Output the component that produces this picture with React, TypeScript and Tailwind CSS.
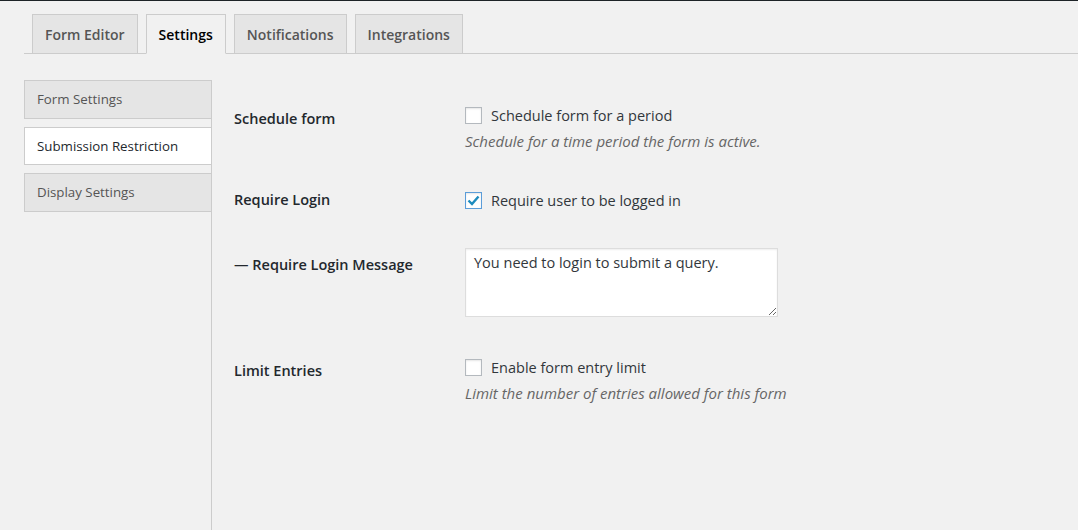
import React from 'react';

const tabs = ['Form Editor', 'Settings', 'Notifications', 'Integrations'];
const sideItems = ['Form Settings', 'Submission Restriction', 'Display Settings'];

function Checkbox({ checked = false }: { checked?: boolean }) {
  return (
    <span
      className={`flex h-[17px] w-[17px] shrink-0 items-center justify-center border bg-white shadow-[inset_0_1px_2px_rgba(0,0,0,0.1)] ${
        checked ? 'border-[#5b9dd9]' : 'border-[#b4b9be]'
      }`}
    >
      {checked && (
        <svg width="13" height="11" viewBox="0 0 13 11">
          <path d="M1.5 5.5 L5 9 L11.5 1.5" fill="none" stroke="#1e8cbe" strokeWidth="2.4" />
        </svg>
      )}
    </span>
  );
}

export default function App() {
  return (
    <div
      className="flex h-[530px] w-[1078px] flex-col overflow-hidden bg-[#f1f1f1] text-[#23282d]"
      style={{ fontFamily: '"Open Sans", "Noto Sans", sans-serif' }}
    >
      <div className="h-px bg-[#1d2327]" />

      <div className="ml-6 flex gap-2 border-b border-[#ccc] pl-2 pt-[13px]">
        {tabs.map((t) => {
          const active = t === 'Settings';
          return (
            <div
              key={t}
              className={`-mb-px flex h-[40px] items-center border px-3 text-[14px] font-semibold ${
                active
                  ? 'border-[#ccc] border-b-[#f1f1f1] bg-[#f1f1f1] text-black'
                  : 'border-[#ccc] bg-[#e5e5e5] text-[#555]'
              }`}
            >
              {t}
            </div>
          );
        })}
      </div>

      <div className="flex flex-1">
        <div className="ml-6 mt-[26px] flex w-[188px] flex-col gap-2 border-r border-[#ccc]">
          {sideItems.map((s) => {
            const active = s === 'Submission Restriction';
            return (
              <div
                key={s}
                className={`flex h-[38.5px] items-center border-y border-l border-[#ccc] pl-3 pt-[2px] text-[13.3px] ${
                  active ? 'bg-white text-[#23282d]' : 'bg-[#e5e5e5] text-[#555]'
                }`}
              >
                {s}
              </div>
            );
          })}
        </div>

        <div className="flex flex-col pl-[22px] pt-[52px] leading-[18px]">
          <div className="flex items-start">
            <div className="w-[231px] pt-1 text-[14.5px] font-semibold">Schedule form</div>
            <div className="flex flex-col">
              <label className="flex h-[18px] items-center gap-[9px] text-[14.5px] text-[#32373c]">
                <Checkbox />
                <span className="pt-[2px]">Schedule form for a period</span>
              </label>
              <p className="mt-2 text-[15px] italic text-[#666]">Schedule for a time period the form is active.</p>
            </div>
          </div>

          <div className="mt-[41px] flex items-start">
            <div className="w-[231px] text-[14.5px] font-semibold">Require Login</div>
            <label className="flex h-[18px] items-center gap-[9px] text-[14.5px] text-[#32373c]">
              <Checkbox checked />
              <span className="pt-[2px]">Require user to be logged in</span>
            </label>
          </div>

          <div className="mt-[39px] flex items-start">
            <div className="w-[231px] pt-2 text-[14.5px] font-semibold">— Require Login Message</div>
            <textarea
              className="h-[69px] w-[313px] resize-y border border-[#ddd] bg-white px-2 py-[5px] text-[14.5px] leading-[18px] text-[#32373c] shadow-[inset_0_1px_2px_rgba(0,0,0,0.07)] outline-none"
              defaultValue="You need to login to submit a query."
            />
          </div>

          <div className="mt-[41px] flex items-start">
            <div className="w-[231px] pt-1 text-[14.5px] font-semibold">Limit Entries</div>
            <div className="flex flex-col">
              <label className="flex h-[18px] items-center gap-[9px] text-[14.5px] text-[#32373c]">
                <Checkbox />
                <span className="pt-[2px]">Enable form entry limit</span>
              </label>
              <p className="mt-2 text-[15px] italic text-[#666]">Limit the number of entries allowed for this form</p>
            </div>
          </div>
        </div>
      </div>
    </div>
  );
}
